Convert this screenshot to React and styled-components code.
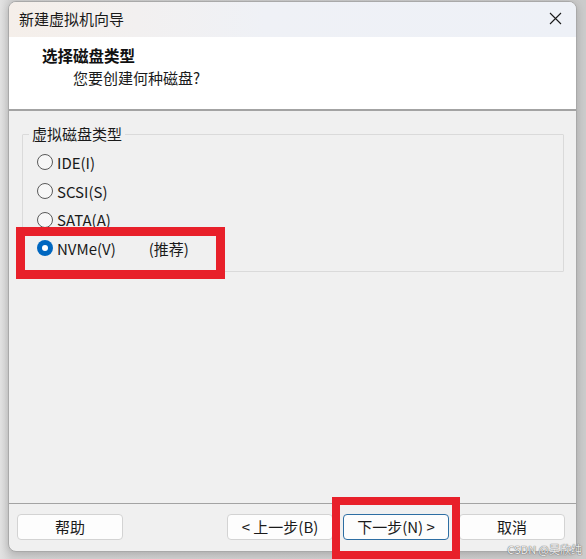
import React, { useState } from "react";
import styled, { createGlobalStyle } from "styled-components";

const GlobalStyle = createGlobalStyle`
  html, body {
    margin: 0;
    padding: 0;
    height: 100%;
    background: #cdcdcd;
  }
  body {
    font-family: "Noto Sans CJK SC", "Noto Sans", sans-serif;
    color: #1b1b1b;
    overflow: hidden;
  }
`;

const options = [
  { id: "ide", label: "IDE(I)" },
  { id: "scsi", label: "SCSI(S)" },
  { id: "sata", label: "SATA(A)" },
  { id: "nvme", label: "NVMe(V)", hint: "(推荐)" },
];

const Page = styled.div`
  position: relative;
  width: 586px;
  height: 559px;
  padding: 1px 9px 9px 8px;
  box-sizing: border-box;
  background: linear-gradient(to right, #e2e2e2 0px, #d2d2d2 12px, #cbcbcb 100%);
`;

const Window = styled.div`
  height: 549px;
  display: flex;
  flex-direction: column;
  border: 1px solid #a9a9a9;
  border-radius: 8px;
  overflow: hidden;
  background: #f0f0f0;
  box-shadow: 0 2px 8px rgba(0, 0, 0, 0.18);
`;

const TitleBar = styled.div`
  height: 35px;
  flex: none;
  display: flex;
  align-items: center;
  justify-content: space-between;
  padding: 0 14px 3px 10px;
  box-sizing: border-box;
  background: linear-gradient(to right, #f5efea, #eff1f6 45%, #eef1f7);
  font-size: 15px;
  color: #1a1a1a;
`;

const CloseButton = styled.div`
  width: 14px;
  height: 14px;
  display: flex;
  align-items: center;
  justify-content: center;
`;

const Header = styled.div`
  height: 74px;
  flex: none;
  background: #ffffff;
  padding: 9px 0 0 33px;
  box-sizing: border-box;
  border-bottom: 2px solid #a3a3a3;
`;

const HeaderTitle = styled.div`
  font-size: 15.5px;
  font-weight: 700;
  line-height: 19px;
  color: #111;
`;

const HeaderSub = styled.div`
  margin: 3px 0 0 31px;
  font-size: 15px;
  line-height: 19px;
  color: #1a1a1a;
`;

const Body = styled.div`
  flex: 1;
  padding: 14px 12px 0 13px;
`;

const Group = styled.fieldset`
  margin: 0;
  padding: 5px 0 8px 14px;
  border: 1px solid #dadada;
  border-radius: 1px;
  height: 147px;
  box-sizing: border-box;
`;

const Legend = styled.legend`
  padding: 0 3px;
  margin-left: -8px;
  font-size: 15px;
  line-height: 18px;
  color: #1a1a1a;
`;

const Option = styled.label`
  display: flex;
  align-items: center;
  height: 28.7px;
  font-size: 15px;
  color: #1a1a1a;
  cursor: default;
`;

const Dot = styled.span`
  width: 16px;
  height: 16px;
  box-sizing: border-box;
  border-radius: 50%;
  margin-right: 4px;
  flex: none;
  border: ${(p) => (p.$on ? "none" : "1px solid #5a5a5a")};
  background: ${(p) => (p.$on ? "#0067c0" : "#f7f7f7")};
  display: flex;
  align-items: center;
  justify-content: center;

  &::after {
    content: "";
    width: 6px;
    height: 6px;
    border-radius: 50%;
    background: #fff;
    display: ${(p) => (p.$on ? "block" : "none")};
  }
`;

const Hint = styled.span`
  margin-left: 33px;
`;

const Footer = styled.div`
  flex: none;
  height: 48px;
  border-top: 1px solid #a3a3a3;
  display: flex;
  align-items: flex-start;
  justify-content: space-between;
  padding: 10px 11px 0 8px;
  box-sizing: border-box;
`;

const ButtonGroup = styled.div`
  display: flex;
  gap: 10px;
`;

const Button = styled.button`
  width: 106px;
  height: 26px;
  box-sizing: border-box;
  border-radius: 4px;
  background: #fdfdfd;
  border: 1px solid ${(p) => (p.$focused ? "#2d6ea3" : "#d3d3d3")};
  font-family: "Noto Sans CJK SC", "Noto Sans", sans-serif;
  font-size: 15px;
  color: #1a1a1a;
  padding: 0;
  line-height: 24px;
`;

const Highlight = styled.div`
  position: absolute;
  box-sizing: border-box;
  border: 9px solid #e8202a;
  pointer-events: none;
`;

const Watermark = styled.div`
  position: absolute;
  right: 4px;
  bottom: 2px;
  font-size: 11px;
  color: rgba(255, 255, 255, 0.9);
  text-shadow: 0 0 1px rgba(90, 90, 90, 0.9), 0 0 1px rgba(90, 90, 90, 0.9);
  font-family: "Noto Sans CJK SC", "Noto Sans", sans-serif;
`;

export default function App() {
  const [value, setValue] = useState("nvme");

  return (
    <Page>
      <GlobalStyle />
      <Window>
        <TitleBar>
          <span>新建虚拟机向导</span>
          <CloseButton>
            <svg width="13" height="13" viewBox="0 0 13 13">
              <path d="M1 1 L12 12 M12 1 L1 12" stroke="#1a1a1a" strokeWidth="1.1" />
            </svg>
          </CloseButton>
        </TitleBar>
        <Header>
          <HeaderTitle>选择磁盘类型</HeaderTitle>
          <HeaderSub>您要创建何种磁盘?</HeaderSub>
        </Header>
        <Body>
          <Group>
            <Legend>虚拟磁盘类型</Legend>
            {options.map((o) => (
              <Option key={o.id} onClick={() => setValue(o.id)}>
                <Dot $on={value === o.id} />
                {o.label}
                {o.hint && <Hint>{o.hint}</Hint>}
              </Option>
            ))}
          </Group>
        </Body>
        <Footer>
          <Button>帮助</Button>
          <ButtonGroup>
            <Button>&lt; 上一步(B)</Button>
            <Button $focused>下一步(N) &gt;</Button>
            <Button>取消</Button>
          </ButtonGroup>
        </Footer>
      </Window>
      <Highlight style={{ left: 16, top: 227, width: 209, height: 52 }} />
      <Highlight style={{ left: 332, top: 497, width: 128, height: 62, borderWidth: 8 }} />
      <Watermark>CSDN @吴欣纯</Watermark>
    </Page>
  );
}
